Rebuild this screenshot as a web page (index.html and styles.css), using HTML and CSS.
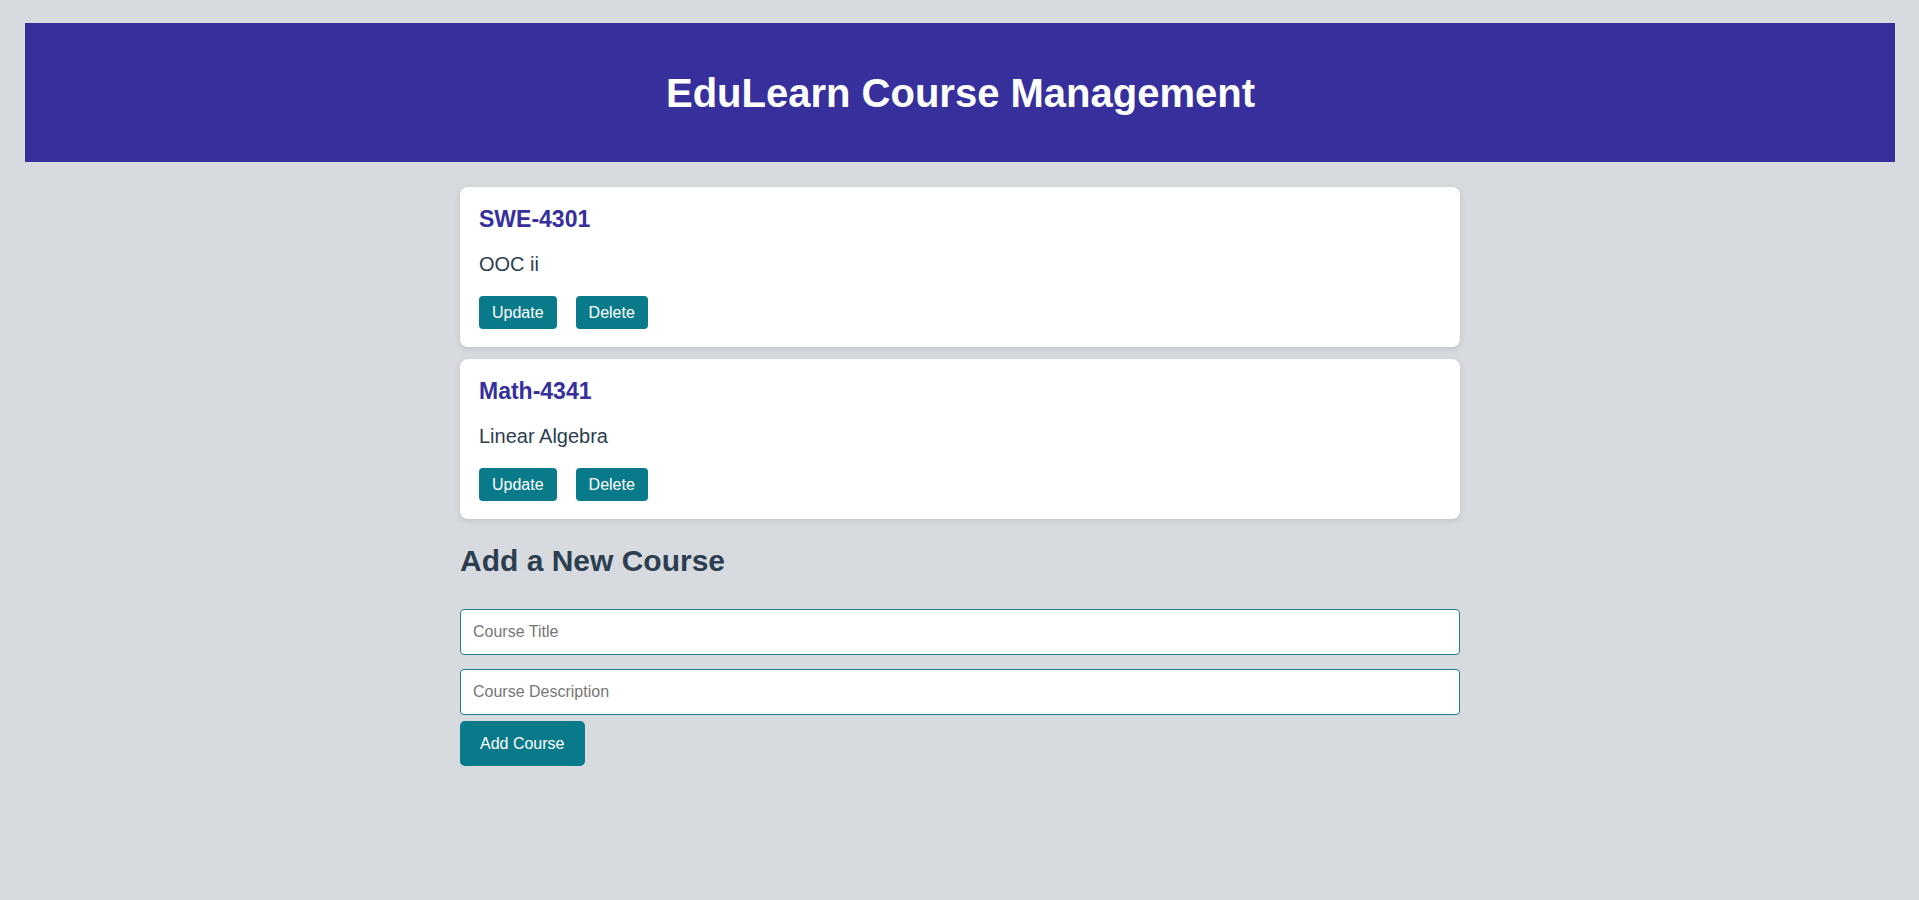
FILE: index.html
```html
<!DOCTYPE html>
<html lang="en">
<head>
<meta charset="utf-8">
<title>EduLearn Course Management</title>
<link rel="stylesheet" href="styles.css">
</head>
<body>
<div class="page">
  <header class="site-header">
    <h1 class="site-title">EduLearn Course Management</h1>
  </header>
  <main class="main">
    <section class="course-list">
      <article class="course-card">
        <h3 class="course-title">SWE-4301</h3>
        <p class="course-desc">OOC ii</p>
        <div class="course-actions">
          <button class="btn btn-small">Update</button>
          <button class="btn btn-small">Delete</button>
        </div>
      </article>
      <article class="course-card">
        <h3 class="course-title">Math-4341</h3>
        <p class="course-desc">Linear Algebra</p>
        <div class="course-actions">
          <button class="btn btn-small">Update</button>
          <button class="btn btn-small">Delete</button>
        </div>
      </article>
    </section>
    <h2 class="form-heading">Add a New Course</h2>
    <form class="course-form">
      <input class="field" type="text" placeholder="Course Title">
      <input class="field" type="text" placeholder="Course Description">
      <button type="button" class="btn btn-large">Add Course</button>
    </form>
  </main>
</div>
</body>
</html>
```

FILE: styles.css
```css
* {
  box-sizing: border-box;
}

html, body {
  margin: 0;
  padding: 0;
}

body {
  background: #d7dadf;
  font-family: "Liberation Sans", Arial, sans-serif;
  color: #2c3e50;
  min-height: 900px;
}

.page {
  padding: 23px 24px 0 25px;
}

.site-header {
  background: #362f9c;
  height: 139px;
  display: flex;
  align-items: center;
  justify-content: center;
}

.site-title {
  margin: 0;
  color: #ffffff;
  font-size: 40px;
  font-weight: bold;
  line-height: 46px;
  padding-left: 1px;
}

.main {
  max-width: 1000px;
  margin: 25px auto 0;
}

.course-card {
  background: #ffffff;
  border-radius: 8px;
  box-shadow: 0 2px 6px rgba(0, 0, 0, 0.1);
  padding: 18px 19px 18px 19px;
  margin-bottom: 12px;
}

.course-title {
  margin: 0;
  font-size: 23px;
  line-height: 28px;
  font-weight: bold;
  color: #362f9c;
}

.course-desc {
  margin: 19px 0 0;
  font-size: 20px;
  line-height: 24px;
  color: #2c3e50;
}

.course-actions {
  margin-top: 20px;
  display: flex;
  gap: 19px;
}

.btn {
  background: #097a8a;
  color: #ffffff;
  border: none;
  font-family: "Liberation Sans", Arial, sans-serif;
  cursor: pointer;
}

.btn-small {
  font-size: 16px;
  line-height: 19px;
  padding: 7px 13px;
  border-radius: 4px;
}

.btn-large {
  font-size: 16px;
  line-height: 19px;
  padding: 13px 20px;
  border-radius: 5px;
  display: block;
  margin-top: 6px;
}

.form-heading {
  margin: 24px 0 31px;
  font-size: 30px;
  line-height: 35px;
  font-weight: bold;
  color: #2c3e50;
}

.course-form {
  margin: 0;
}

.field {
  display: block;
  width: 100%;
  height: 46px;
  padding: 0 12px;
  margin: 0 0 14px;
  border: 1px solid #1b7d8c;
  border-radius: 4px;
  background: #ffffff;
  font-family: "Liberation Sans", Arial, sans-serif;
  font-size: 16px;
  color: #2c3e50;
}

.field:last-of-type {
  margin-bottom: 0;
}

.field::placeholder {
  color: #767676;
}
```
